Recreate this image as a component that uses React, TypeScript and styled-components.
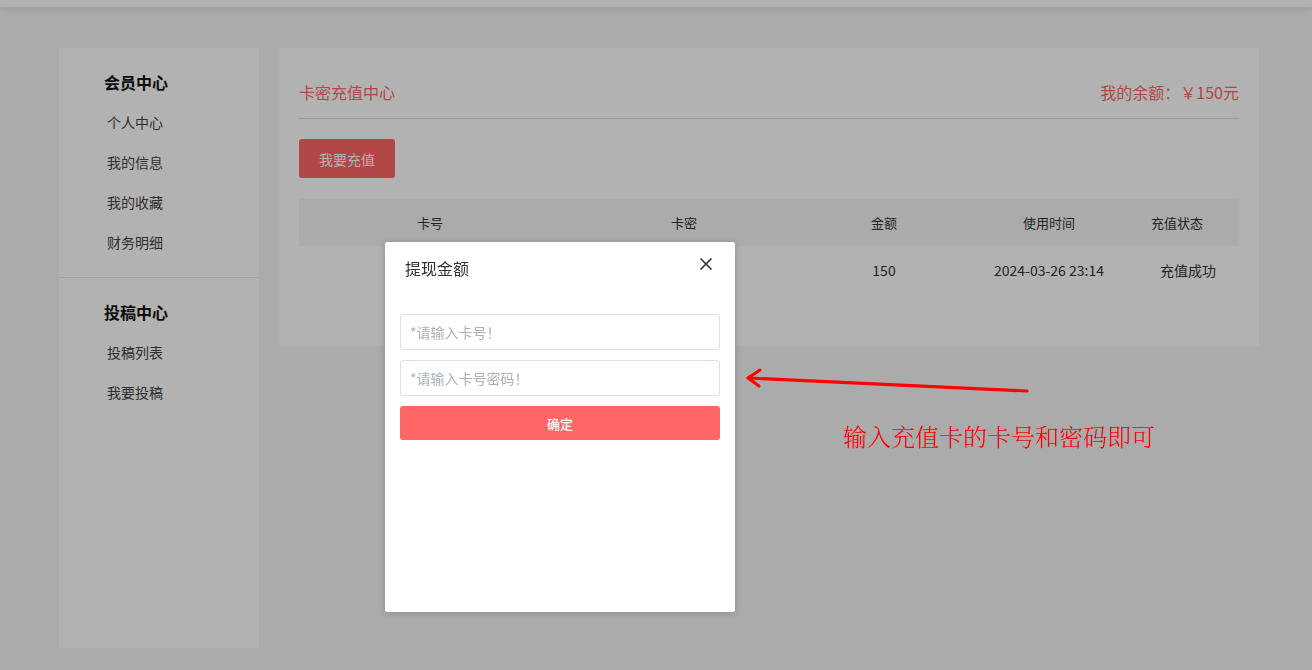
import React from "react";
import styled, { createGlobalStyle } from "styled-components";

const GlobalStyle = createGlobalStyle`
  html, body {
    margin: 0;
    padding: 0;
    background: #f5f5f5;
    font-family: "Noto Sans CJK SC", "Liberation Sans", sans-serif;
    color: #333;
    overflow: hidden;
  }
  * { box-sizing: border-box; }
`;

const sideGroups = [
  { title: "会员中心", items: ["个人中心", "我的信息", "我的收藏", "财务明细"] },
  { title: "投稿中心", items: ["投稿列表", "我要投稿"] },
];

const rows = [{ no: "", pwd: "", amount: "150", time: "2024-03-26 23:14", status: "充值成功" }];

const App = () => {
  return (
    <>
      <GlobalStyle />
      <Page>
        <TopBar />
        <Container>
          <Sidebar>
            {sideGroups.map((g, i) => (
              <SideGroup key={g.title} $last={i === sideGroups.length - 1}>
                <SideTitle>{g.title}</SideTitle>
                {g.items.map((it) => (
                  <SideItem key={it}>{it}</SideItem>
                ))}
              </SideGroup>
            ))}
          </Sidebar>
          <Main>
            <MainHead>
              <MainTitle>卡密充值中心</MainTitle>
              <Balance>我的余额：￥150元</Balance>
            </MainHead>
            <RechargeBtn>我要充值</RechargeBtn>
            <Table>
              <HeadRow>
                <Cell>卡号</Cell>
                <Cell>卡密</Cell>
                <Cell>金额</Cell>
                <Cell>使用时间</Cell>
                <Cell $shift={-11}>充值状态</Cell>
              </HeadRow>
              {rows.map((r, i) => (
                <BodyRow key={i}>
                  <Cell>{r.no}</Cell>
                  <Cell>{r.pwd}</Cell>
                  <Cell>{r.amount}</Cell>
                  <Cell>{r.time}</Cell>
                  <Cell>{r.status}</Cell>
                </BodyRow>
              ))}
            </Table>
          </Main>
        </Container>
      </Page>

      <Mask />

      <Dialog>
        <DialogHead>
          <DialogTitle>提现金额</DialogTitle>
          <CloseBtn aria-label="关闭">
            <svg width="14" height="14" viewBox="0 0 14 14">
              <path d="M1.5 1.5 L12.5 12.5 M12.5 1.5 L1.5 12.5" stroke="#303133" strokeWidth="1.6" fill="none" />
            </svg>
          </CloseBtn>
        </DialogHead>
        <DialogBody>
          <Field placeholder="*请输入卡号！" />
          <Field placeholder="*请输入卡号密码！" />
          <ConfirmBtn>确定</ConfirmBtn>
        </DialogBody>
      </Dialog>

      <Arrow width="300" height="40" viewBox="0 0 300 40">
        <path d="M283 25 L4 12" stroke="#ff0000" strokeWidth="3.2" strokeLinecap="round" fill="none" />
        <path d="M16 4 L4 12 L15 20" stroke="#ff0000" strokeWidth="3" strokeLinecap="round" strokeLinejoin="round" fill="none" />
      </Arrow>
      <Note>输入充值卡的卡号和密码即可</Note>
    </>
  );
};

const Page = styled.div`
  width: 1312px;
  height: 670px;
`;

const TopBar = styled.div`
  height: 7px;
  background: #fff;
  box-shadow: 0 2px 6px rgba(0, 0, 0, 0.12);
`;

const Container = styled.div`
  display: flex;
  align-items: flex-start;
  gap: 20px;
  padding: 41px 0 0 59px;
`;

const Sidebar = styled.div`
  width: 200px;
  height: 600px;
  background: #fff;
`;

const SideGroup = styled.div<{ $last?: boolean }>`
  padding: 22px 0 15px 45px;
  border-bottom: ${(p) => (p.$last ? "none" : "1px solid #e8e8e8")};
`;

const SideTitle = styled.div`
  font-size: 16px;
  font-weight: bold;
  color: #111;
  line-height: 24px;
  margin-bottom: 8px;
`;

const SideItem = styled.div`
  font-size: 14px;
  color: #444;
  line-height: 40px;
  padding-left: 3px;
`;

const Main = styled.div`
  width: 980px;
  background: #fff;
  padding: 20px 20px 53px;
`;

const MainHead = styled.div`
  display: flex;
  justify-content: space-between;
  align-items: center;
  height: 51px;
  padding-bottom: 2px;
  border-bottom: 1px solid #ddd;
  color: #ff6666;
  font-size: 16px;
`;

const MainTitle = styled.div``;

const Balance = styled.div``;

const RechargeBtn = styled.button`
  display: block;
  margin-top: 20px;
  width: 96px;
  height: 39px;
  border: none;
  border-radius: 3px;
  background: #ff6666;
  color: #fff;
  font-family: inherit;
  font-size: 14px;
`;

const Table = styled.div`
  margin-top: 21px;
`;

const HeadRow = styled.div`
  display: grid;
  grid-template-columns: 262px 246px 154px 176px 1fr;
  height: 47px;
  align-items: center;
  background: #f5f5f5;
  font-size: 13px;
  color: #333;
`;

const BodyRow = styled(HeadRow)`
  background: #fff;
  font-size: 14px;
`;

const Cell = styled.div<{ $shift?: number }>`
  text-align: center;
  transform: translateX(${(p) => p.$shift || 0}px);
`;

const Mask = styled.div`
  position: fixed;
  inset: 0;
  background: rgba(0, 0, 0, 0.3);
`;

const Dialog = styled.div`
  position: fixed;
  left: 385px;
  top: 242px;
  width: 350px;
  height: 370px;
  background: #fff;
  border-radius: 2px;
  box-shadow: 0 1px 8px rgba(0, 0, 0, 0.2);
`;

const DialogHead = styled.div`
  display: flex;
  justify-content: space-between;
  align-items: flex-start;
  padding: 14px 22px 0 20px;
  height: 72px;
`;

const DialogTitle = styled.div`
  font-size: 16px;
  color: #303133;
  line-height: 24px;
`;

const CloseBtn = styled.button`
  border: none;
  background: none;
  padding: 0;
  margin-top: 1px;
  width: 14px;
  height: 14px;
  display: flex;
`;

const DialogBody = styled.div`
  display: flex;
  flex-direction: column;
  gap: 10px;
  padding: 0 15px;
`;

const Field = styled.input`
  height: 36px;
  border: 1px solid #dcdfe6;
  border-radius: 3px;
  padding: 0 9px;
  font-family: inherit;
  font-size: 14px;
  outline: none;
  &::placeholder {
    color: #aab1bc;
  }
`;

const ConfirmBtn = styled.button`
  height: 34px;
  border: none;
  border-radius: 3px;
  background: #ff6666;
  color: #fff;
  font-family: inherit;
  font-size: 13px;
  font-weight: 500;
`;

const Arrow = styled.svg`
  position: fixed;
  left: 744px;
  top: 366px;
`;

const Note = styled.div`
  position: fixed;
  left: 843px;
  top: 420px;
  font-size: 24px;
  line-height: 32px;
  color: #ff0000;
  font-family: "Noto Serif CJK SC", "Noto Sans CJK SC", serif;
  font-weight: 300;
  white-space: nowrap;
`;

export default App;
